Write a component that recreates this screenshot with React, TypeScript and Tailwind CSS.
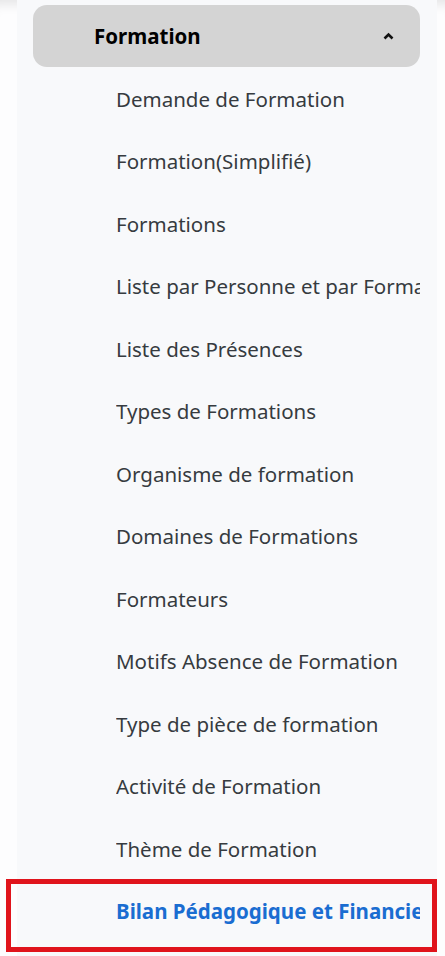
import { useState } from "react";

const items = [
  "Demande de Formation",
  "Formation(Simplifié)",
  "Formations",
  "Liste par Personne et par Formation",
  "Liste des Présences",
  "Types de Formations",
  "Organisme de formation",
  "Domaines de Formations",
  "Formateurs",
  "Motifs Absence de Formation",
  "Type de pièce de formation",
  "Activité de Formation",
  "Thème de Formation",
  "Bilan Pédagogique et Financier",
];

export default function App() {
  const [open, setOpen] = useState(true);
  const active = items.length - 1;

  return (
    <div
      className="relative h-[956px] w-[445px] overflow-hidden bg-[#fdfdfe] shadow-[inset_0_14px_12px_-10px_rgba(0,0,0,0.10)]"
      style={{ fontFamily: '"Noto Sans", "Open Sans", sans-serif' }}
    >
      <aside className="ml-[17px] h-full w-[420px] bg-[#f8f9fb] pt-[5px]">
        <button
          type="button"
          onClick={() => setOpen((o) => !o)}
          className="ml-[16px] flex h-[62px] w-[387px] items-center rounded-[14px] bg-[#d4d4d4] pl-[61px] pr-[26px]"
        >
          <span className="text-[20.5px] font-bold text-black">Formation</span>
          <svg width="11" height="8" viewBox="0 0 11 8" className="ml-auto">
            <polyline points="1.5,6.5 5.5,2.5 9.5,6.5" fill="none" stroke="#111" strokeWidth="2.6" />
          </svg>
        </button>

        {open ? (
          <ul className="mt-[1px] w-[403px] overflow-hidden">
            {items.map((label, i) => (
              <li key={label} className="flex h-[62.5px] items-center pl-[99px]">
                <span
                  className={`overflow-hidden whitespace-nowrap text-[20.5px] ${
                    i === active ? "font-bold text-[#1a6dd1]" : "text-[#363b40]"
                  }`}
                >
                  {label}
                </span>
              </li>
            ))}
          </ul>
        ) : null}
      </aside>

      {/* highlight frame around the current entry */}
      <div className="pointer-events-none absolute left-[6px] top-[879px] h-[73px] w-[431px] border-[5px] border-[#e0141c]" />
    </div>
  );
}
